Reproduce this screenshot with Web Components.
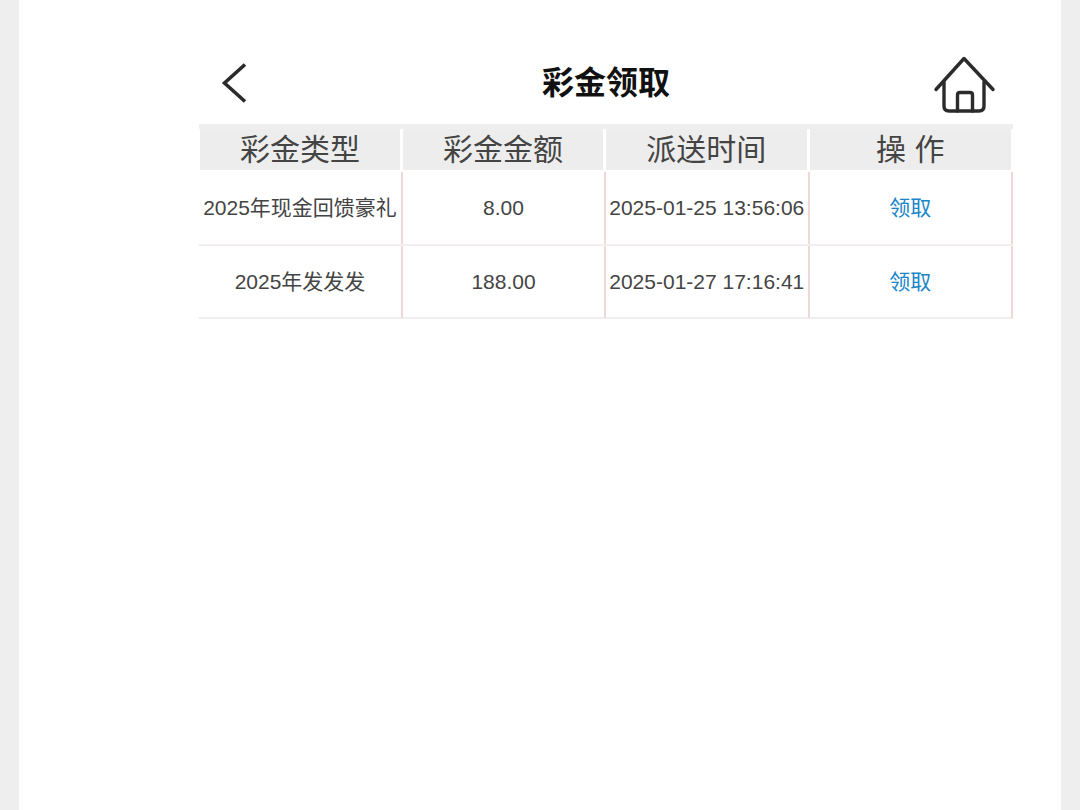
<!DOCTYPE html>
<html lang="zh">
<head>
<meta charset="utf-8">
<title>彩金领取</title>
<style>
  html, body { margin: 0; padding: 0; height: 100%; background: #eeeeee; }
  body { font-family: "Liberation Sans", "Noto Sans CJK SC", sans-serif; overflow: hidden; }
</style>
</head>
<body>
<bonus-page>
  <bonus-header title="彩金领取"></bonus-header>
  <bonus-table>
    <bonus-row name="2025年现金回馈豪礼" amount="8.00" time="2025-01-25 13:56:06"></bonus-row>
    <bonus-row name="2025年发发发" amount="188.00" time="2025-01-27 17:16:41"></bonus-row>
  </bonus-table>
</bonus-page>

<script>
class BonusPage extends HTMLElement {
  constructor() {
    super();
    this.shadowDOM = this.attachShadow({ mode: 'open' });
    this.shadowDOM.innerHTML = `
      <style>
        :host {
          display: block;
          box-sizing: border-box;
          width: 1042px;
          height: 810px;
          margin-left: 19px;
          padding: 0 48px 0 180px;
          background: #fff;
        }
      </style>
      <slot></slot>
    `;
  }
}

class BonusHeader extends HTMLElement {
  constructor() {
    super();
    this.shadowDOM = this.attachShadow({ mode: 'open' });
  }

  connectedCallback() {
    this.shadowDOM.innerHTML = `
      <style>
        :host {
          display: grid;
          grid-template-columns: 1fr auto 1fr;
          align-items: center;
          height: 124px;
          box-sizing: border-box;
          padding: 42px 16px 0 16px;
        }
        h1 {
          margin: 0;
          font-size: 32px;
          line-height: 80px;
          font-weight: 700;
          color: #111;
        }
        svg { display: block; fill: none; stroke: #2b2b2b; }
        .back { margin-left: 4px; }
        .home { justify-self: end; }
      </style>
      <svg class="back" width="30" height="48" viewBox="0 0 30 48" stroke-width="3.6">
        <path d="M26 5.500 L5.500 24 L26 42.500" />
      </svg>
      <h1>${this.getAttribute('title')}</h1>
      <svg class="home" width="64" height="60" viewBox="0 0 64 60" stroke-width="3.400" stroke-linejoin="round" stroke-linecap="round">
        <path d="M3 36.500 L31 5.500 L60 36.500" />
        <path d="M11 29 V53 Q11 58 16 58 H46 Q51 58 51 53 V29" />
        <path d="M24.500 58 V42 Q24.500 39.500 27 39.500 H37 Q39.500 39.500 39.500 42 V58" />
      </svg>
    `;
  }
}

class BonusTable extends HTMLElement {
  constructor() {
    super();
    this.shadowDOM = this.attachShadow({ mode: 'open' });
    this.shadowDOM.innerHTML = `
      <style>
        :host {
          display: block;
          width: 814px;
          border-top: 5px solid #efefef;
        }
        .head {
          display: grid;
          grid-template-columns: 204px 203px 203.500px 203.500px;
          height: 43px;
          box-sizing: border-box;
          border-bottom: 2px solid #fff;
        }
        .head div {
          background: #ededed;
          border-right: 3px solid #fff;
          font-size: 30px;
          line-height: 41px;
          text-align: center;
          color: #444;
          white-space: pre;
        }
        .head div:first-child { margin-left: 1px; }
        .head div:last-child { border-right-width: 2px; }
      </style>
      <div class="head">
        <div>彩金类型</div>
        <div>彩金金额</div>
        <div>派送时间</div>
        <div>操 作</div>
      </div>
      <slot></slot>
    `;
  }
}

class BonusRow extends HTMLElement {
  constructor() {
    super();
    this.shadowDOM = this.attachShadow({ mode: 'open' });
  }

  connectedCallback() {
    this.shadowDOM.innerHTML = `
      <style>
        :host {
          display: grid;
          grid-template-columns: 204px 203px 203.500px 203.500px;
          height: 73.500px;
          box-sizing: border-box;
          border-bottom: 2px solid #f3eeee;
          font-size: 21px;
          color: #444;
        }
        div {
          border-right: 2px solid #f0d8d8;
          line-height: 72px;
          text-align: center;
          white-space: nowrap;
        }
        a { color: #1a86c8; text-decoration: none; }
      </style>
      <div>${this.getAttribute('name')}</div>
      <div>${this.getAttribute('amount')}</div>
      <div>${this.getAttribute('time')}</div>
      <div><a href="#">领取</a></div>
    `;
  }
}

customElements.define('bonus-page', BonusPage);
customElements.define('bonus-header', BonusHeader);
customElements.define('bonus-table', BonusTable);
customElements.define('bonus-row', BonusRow);
</script>
</body>
</html>
